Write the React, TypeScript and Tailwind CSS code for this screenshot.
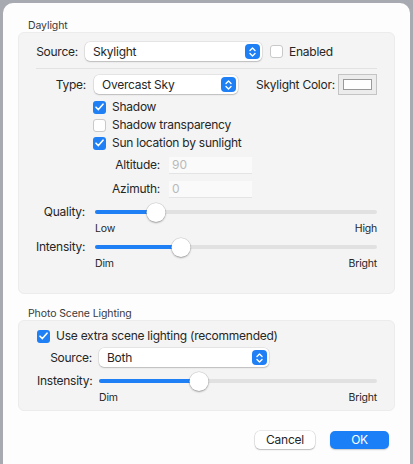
import React from "react";

// Lighting settings sheet — macOS-style dialog with two grouped boxes.

const font = { fontFamily: "Inter, 'Noto Sans', sans-serif" };

function Stepper() {
  return (
    <span className="flex h-[15px] w-[15px] items-center justify-center rounded-[4px] bg-[#1f7ff5]">
      <svg width="7" height="10" viewBox="0 0 7 10" fill="none">
        <path d="M1 3.5 3.5 1 6 3.5M1 6.5 3.5 9 6 6.5" stroke="white" strokeWidth="1.4" strokeLinecap="round" strokeLinejoin="round" />
      </svg>
    </span>
  );
}

function Popup({ value, width }: { value: string; width: number }) {
  return (
    <div
      className="flex h-[19px] items-center justify-between rounded-[5px] bg-white pl-[8px] pr-[2px] text-[12px] tracking-[-0.25px] text-[#262626] shadow-[0_0_0_0.5px_rgba(0,0,0,0.12),0_1px_1.5px_rgba(0,0,0,0.18)]"
      style={{ width }}
    >
      <span>{value}</span>
      <Stepper />
    </div>
  );
}

function Check({ on, label }: { on?: boolean; label: string }) {
  return (
    <div className="flex h-[18px] items-center gap-[6px] whitespace-nowrap text-[12px] tracking-[-0.25px] text-[#262626]">
      {on ? (
        <span className="flex h-[13px] w-[13px] items-center justify-center rounded-[3px] bg-[#1f7ff5]">
          <svg width="9" height="8" viewBox="0 0 9 8" fill="none">
            <path d="M1 4.2 3.4 6.6 8 1.2" stroke="white" strokeWidth="1.6" strokeLinecap="round" strokeLinejoin="round" />
          </svg>
        </span>
      ) : (
        <span className="h-[13px] w-[13px] rounded-[3px] border border-[#c9c9c9] bg-white" />
      )}
      <span>{label}</span>
    </div>
  );
}

function Slider({ pct }: { pct: number }) {
  return (
    <div className="relative flex h-[18px] flex-1 items-center">
      <div className="h-[4px] w-full rounded-full bg-[#e1e1e1]" />
      <div className="absolute left-0 h-[4px] rounded-full bg-[#1f7ff5]" style={{ width: `${pct}%` }} />
      <div
        className="absolute h-[19px] w-[19px] -translate-x-1/2 rounded-full bg-white shadow-[0_0_0_0.5px_rgba(0,0,0,0.15),0_1px_2px_rgba(0,0,0,0.3)]"
        style={{ left: `${pct}%` }}
      />
    </div>
  );
}

function Row({ label, labelW, gap, children, className = "" }: { label: string; labelW: number; gap: number; children: React.ReactNode; className?: string }) {
  return (
    <div className={`flex items-center ${className}`}>
      <span
        className="shrink-0 whitespace-nowrap text-right text-[12px] tracking-[-0.25px] text-[#262626]"
        style={{ width: labelW, marginRight: gap }}
      >
        {label}
      </span>
      {children}
    </div>
  );
}

function Ends({ a, b, indent }: { a: string; b: string; indent: string }) {
  return (
    <div className={`${indent} flex h-[16px] items-center justify-between text-[10.5px] tracking-[-0.2px] text-[#262626]`}>
      <span>{a}</span>
      <span>{b}</span>
    </div>
  );
}

export default function App() {
  return (
    <div className="h-[464px] w-[413px] overflow-hidden bg-[#a7abb1] pl-[3px] pr-[3px] pt-[3px]" style={font}>
      <div className="h-[470px] rounded-[10px] bg-[#fdfdfd] px-[15px] pt-[16px]">
        {/* Daylight */}
        <div className="pl-[10px] text-[10.5px] leading-[13px] tracking-[-0.1px] text-[#3a3a3a]">Daylight</div>
        <div className="h-[262px] rounded-[6px] border border-[#ececec] bg-[#f4f4f4] pl-[17px] pr-[17px] pt-[9px]">
          <Row label="Source:" labelW={42} gap={7}>
            <Popup value="Skylight" width={177} />
            <div className="ml-[8px]">
              <Check label="Enabled" />
            </div>
          </Row>
          <div className="mt-[7px] h-px bg-[#e2e2e2]" />
          <Row label="Type:" labelW={50} gap={8} className="mt-[5px] h-[21px]">
            <Popup value="Overcast Sky" width={144} />
            <span className="ml-[18px] whitespace-nowrap text-[12px] tracking-[-0.25px] text-[#262626]">Skylight Color:</span>
            <div className="ml-auto flex h-[21px] w-[39px] items-center justify-center border border-[#c4c4c4] bg-[#ececec]">
              <div className="h-[11px] w-[29px] border border-[#9a9a9a] bg-white" />
            </div>
          </Row>
          <div className="ml-[57px] mt-[3px]">
            <Check on label="Shadow" />
            <Check label="Shadow transparency" />
            <Check on label="Sun location by sunlight" />
          </div>
          <Row label="Altitude:" labelW={124} gap={9} className="mt-[4px]">
            <div className="flex h-[17px] w-[83px] items-center border-b border-[#e4e4e4] bg-[#fafafa] pl-[3px] text-[12px] text-[#b9b9b9]">90</div>
          </Row>
          <Row label="Azimuth:" labelW={124} gap={9} className="mt-[6px]">
            <div className="flex h-[17px] w-[83px] items-center border-b border-[#e4e4e4] bg-[#fafafa] pl-[3px] text-[12px] text-[#b9b9b9]">0</div>
          </Row>
          <Row label="Quality:" labelW={49} gap={10} className="mt-[5px]">
            <Slider pct={21.5} />
          </Row>
          <Ends a="Low" b="High" indent="ml-[59px]" />
          <Row label="Intensity:" labelW={49} gap={10} className="mt-[1px]">
            <Slider pct={30.5} />
          </Row>
          <Ends a="Dim" b="Bright" indent="ml-[59px]" />
        </div>

        {/* Photo Scene Lighting */}
        <div className="mt-[13px] pl-[10px] text-[10.5px] leading-[13px] tracking-[-0.1px] text-[#3a3a3a]">Photo Scene Lighting</div>
        <div className="h-[91px] rounded-[6px] border border-[#ececec] bg-[#f4f4f4] pl-[18px] pr-[17px] pt-[6px]">
          <Check on label="Use extra scene lighting (recommended)" />
          <Row label="Source:" labelW={55} gap={7} className="mt-[3px]">
            <Popup value="Both" width={170} />
          </Row>
          <Row label="Instensity:" labelW={55} gap={7} className="mt-[5px]">
            <Slider pct={36} />
          </Row>
          <Ends a="Dim" b="Bright" indent="ml-[62px]" />
        </div>

        {/* Buttons */}
        <div className="mt-[20px] flex justify-end gap-[15px] pr-[6px]">
          <button className="h-[18px] w-[60px] rounded-[5px] bg-white text-[12px] leading-[18px] tracking-[-0.25px] text-[#262626] shadow-[0_0_0_0.5px_rgba(0,0,0,0.15),0_1px_1.5px_rgba(0,0,0,0.2)]">
            Cancel
          </button>
          <button className="h-[18px] w-[59px] rounded-[5px] bg-[#1b7ff8] text-[12px] leading-[18px] tracking-[-0.25px] text-white shadow-[0_1px_1.5px_rgba(0,0,0,0.2)]">
            OK
          </button>
        </div>
      </div>
    </div>
  );
}
